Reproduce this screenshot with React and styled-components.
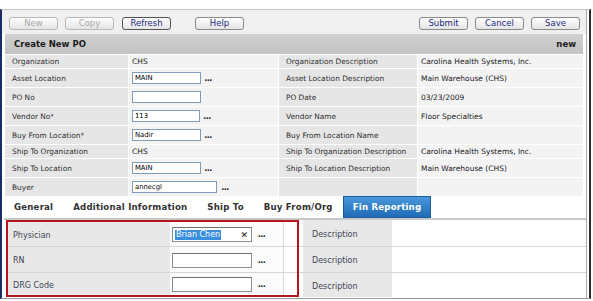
import React from 'react';
import styled, { createGlobalStyle } from 'styled-components';

const GlobalStyle = createGlobalStyle`
  html, body { margin: 0; padding: 0; background: #fff; }
  body { font-family: "DejaVu Sans", Verdana, sans-serif; }
  * { box-sizing: border-box; }
`;

const Page = styled.div`
  width: 593px;
  height: 301px;
  overflow: hidden;
  background: #fff;
`;

const Window = styled.div`
  margin-top: 9px;
  width: 591px;
  height: 290px;
  border-left: 2px solid #1c2b68;
  border-right: 2px solid #2e2e2e;
  border-top: 1px solid #c4c4c4;
  border-bottom: 1px solid #9c9c9c;
  display: flex;
`;

const Panel = styled.div`
  width: 585px;
  border-right: 1px solid #a9a9a9;
  display: flex;
  flex-direction: column;
  background: #fff;
`;

const Toolbar = styled.div`
  height: 24px;
  flex: none;
  background: #f0f0f0;
  display: flex;
  justify-content: space-between;
  align-items: flex-start;
  padding: 7px 6px 0 7px;
`;

const ButtonGroup = styled.div`
  display: flex;
  gap: 7px;
`;

const Button = styled.button`
  width: 49px;
  height: 13px;
  padding: 0;
  margin: 0 0 0 ${(p) => p.$offset || 0}px;
  border: 1px solid ${(p) => (p.disabled ? '#b8b8b8' : p.$focus ? '#555' : '#8a8a8a')};
  border-radius: 3px;
  background: linear-gradient(#fefefe, #e4e4e4);
  font-family: "DejaVu Sans", Verdana, sans-serif;
  font-size: 8.5px;
  line-height: 11px;
  color: ${(p) => (p.disabled ? '#a9a9a9' : '#1f2a7c')};
`;

const TitleBar = styled.div`
  height: 20px;
  flex: none;
  margin: 0 3px;
  padding: 0 7px 0 9px;
  display: flex;
  align-items: center;
  justify-content: space-between;
  background: linear-gradient(#d0d0d0, #c3c3c3);
  font-size: 8.5px;
  font-weight: bold;
  color: #1a1a1a;
`;

const Grid = styled.div`
  flex: none;
  margin: 0 3px;
  padding-top: 1px;
  display: grid;
  grid-template-columns: 123px 149px 138px 165px;
  grid-template-rows: 13px 18px 18px 18px 18px 13px 18px 18px;
  gap: 1px;
  background: #fff;
`;

const Label = styled.div`
  background: #e6e6e6;
  padding-left: 7px;
  display: flex;
  align-items: center;
  font-size: 7.4px;
  color: #2e2e2e;
  white-space: nowrap;
`;

const Value = styled.div`
  background: #f3f3f3;
  padding-left: 3px;
  display: flex;
  align-items: center;
  font-size: 7.5px;
  color: #222;
  white-space: nowrap;
`;

const Input = styled.div`
  width: ${(p) => p.$w || 69}px;
  height: 12px;
  border: 1px solid #7f9db9;
  background: #fff;
  padding-left: 2px;
  display: flex;
  align-items: center;
  font-size: 6.8px;
  color: #000;
`;

const Dots = styled.span`
  margin-left: ${(p) => p.$ml ?? 2}px;
  width: ${(p) => p.$w || 10}px;
  font-size: 8px;
  font-weight: bold;
  line-height: 8px;
  letter-spacing: -0.5px;
  color: #222;
  text-align: center;
  align-self: center;
  padding-top: 1px;
`;

const TabBar = styled.div`
  height: 24px;
  flex: none;
  margin-left: 2px;
  display: flex;
  background: #fff;
  border-bottom: 2px solid #c8c8c8;
`;

const Tab = styled.div`
  height: 22px;
  padding: 0 ${(p) => (p.$active ? 9 : 10)}px;
  display: flex;
  align-items: center;
  font-size: 8.6px;
  letter-spacing: 0.2px;
  font-weight: bold;
  white-space: nowrap;
  color: ${(p) => (p.$active ? '#fff' : '#333')};
  background: ${(p) => (p.$active ? 'linear-gradient(#4a97dc, #1f6bb6)' : 'transparent')};
  border: ${(p) => (p.$active ? '1px solid #1a5ea3' : 'none')};
`;

const Lower = styled.div`
  height: 77px;
  flex: none;
  margin-left: 4px;
  display: flex;
`;

const Highlight = styled.div`
  width: 293px;
  border: 2px solid #b3161c;
  display: flex;
  flex-direction: column;
`;

const LeftRow = styled.div`
  height: ${(p) => p.$h}px;
  display: flex;
  border-top: ${(p) => (p.$first ? 'none' : '1px solid #d6d6d6')};
  flex: none;
`;

const LowerLabel = styled.div`
  width: ${(p) => p.$w}px;
  flex: none;
  background: #e8e8e8;
  padding-left: ${(p) => p.$pl}px;
  padding-top: 2px;
  display: flex;
  align-items: center;
  font-size: 8px;
  color: #3d4654;
`;

const LowerValue = styled.div`
  width: 114px;
  flex: none;
  background: #fbfbfb;
  border-right: 1px solid #dcdcdc;
  padding-left: 2px;
  padding-top: 1px;
  display: flex;
  align-items: center;
`;

const Filler = styled.div`
  flex: 1;
  background: #fff;
`;

const RightSide = styled.div`
  flex: 1;
  display: flex;
  flex-direction: column;
`;

const RightRow = styled.div`
  height: ${(p) => p.$h}px;
  flex: none;
  display: flex;
  padding-left: 4px;
  border-top: ${(p) => (p.$first ? 'none' : '1px solid #d6d6d6')};
`;

const TextBox = styled.div`
  width: 80px;
  height: 15px;
  border: 1px solid #8e8e8e;
  border-top-color: #6f6f6f;
  background: #fff;
  display: flex;
  align-items: center;
  padding: 0 2px;
  font-size: 8px;
`;

const Selected = styled.span`
  background: #3a8ee0;
  color: #fff;
  padding: 0 1px;
  line-height: 10px;
`;

const Clear = styled.span`
  margin-left: auto;
  margin-right: 1px;
  font-size: 9px;
  color: #222;
`;

const topRows = [
  [['Organization'], ['text', 'CHS'], ['Organization Description'], ['text', 'Carolina Health Systems, Inc.']],
  [['Asset Location'], ['input', 'MAIN', 69, true], ['Asset Location Description'], ['text', 'Main Warehouse (CHS)']],
  [['PO No'], ['input', '', 69, false], ['PO Date'], ['text', '03/23/2009']],
  [['Vendor No*'], ['input', '113', 68, true], ['Vendor Name'], ['text', 'Floor Specialties']],
  [['Buy From Location*'], ['input', 'Nadir', 69, true], ['Buy From Location Name'], ['text', '']],
  [['Ship To Organization'], ['text', 'CHS'], ['Ship To Organization Description'], ['text', 'Carolina Health Systems, Inc.']],
  [['Ship To Location'], ['input', 'MAIN', 69, true], ['Ship To Location Description'], ['text', 'Main Warehouse (CHS)']],
  [['Buyer'], ['input', 'annecgl', 85, true, 3], [''], ['text', '']],
];

function ValueCell({ spec }) {
  const [kind, val, w, dots, ml] = spec;
  if (kind === 'text') return <Value>{val}</Value>;
  return (
    <Value>
      <Input $w={w}>{val}</Input>
      {dots && <Dots $ml={ml}>...</Dots>}
    </Value>
  );
}

const lowerRows = [
  { label: 'Physician', lh: 24, rh: 26, selected: true },
  { label: 'RN', lh: 25, rh: 25 },
  { label: 'DRG Code', lh: 22, rh: 24 },
];

export default function App() {
  return (
    <>
      <GlobalStyle />
      <Page>
        <Window>
          <Panel>
            <Toolbar>
              <ButtonGroup>
                <Button disabled>New</Button>
                <Button disabled>Copy</Button>
                <Button $focus $offset={1}>Refresh</Button>
                <Button $offset={17}>Help</Button>
              </ButtonGroup>
              <ButtonGroup>
                <Button>Submit</Button>
                <Button>Cancel</Button>
                <Button>Save</Button>
              </ButtonGroup>
            </Toolbar>
            <TitleBar>
              <span>Create New PO</span>
              <span>new</span>
            </TitleBar>
            <Grid>
              {topRows.map((r, i) => (
                <React.Fragment key={i}>
                  <Label>{r[0][0]}</Label>
                  <ValueCell spec={r[1]} />
                  <Label>{r[2][0]}</Label>
                  <ValueCell spec={r[3]} />
                </React.Fragment>
              ))}
            </Grid>
            <TabBar>
              <Tab>General</Tab>
              <Tab>Additional Information</Tab>
              <Tab>Ship To</Tab>
              <Tab>Buy From/Org</Tab>
              <Tab $active>Fin Reporting</Tab>
            </TabBar>
            <Lower>
              <Highlight>
                {lowerRows.map((r, i) => (
                  <LeftRow key={r.label} $h={r.lh + (i ? 1 : 0)} $first={i === 0}>
                    <LowerLabel $w={162} $pl={5}>{r.label}</LowerLabel>
                    <LowerValue>
                      <TextBox>
                        {r.selected && <Selected>Brian Chen</Selected>}
                        {r.selected && <Clear>✕</Clear>}
                      </TextBox>
                      <Dots $ml={3} $w={13}>...</Dots>
                    </LowerValue>
                    <Filler />
                  </LeftRow>
                ))}
              </Highlight>
              <RightSide>
                {lowerRows.map((r, i) => (
                  <RightRow key={r.label} $h={r.rh + (i ? 1 : 0)} $first={i === 0}>
                    <LowerLabel $w={89} $pl={9}>Description</LowerLabel>
                    <Filler />
                  </RightRow>
                ))}
              </RightSide>
            </Lower>
          </Panel>
        </Window>
      </Page>
    </>
  );
}
